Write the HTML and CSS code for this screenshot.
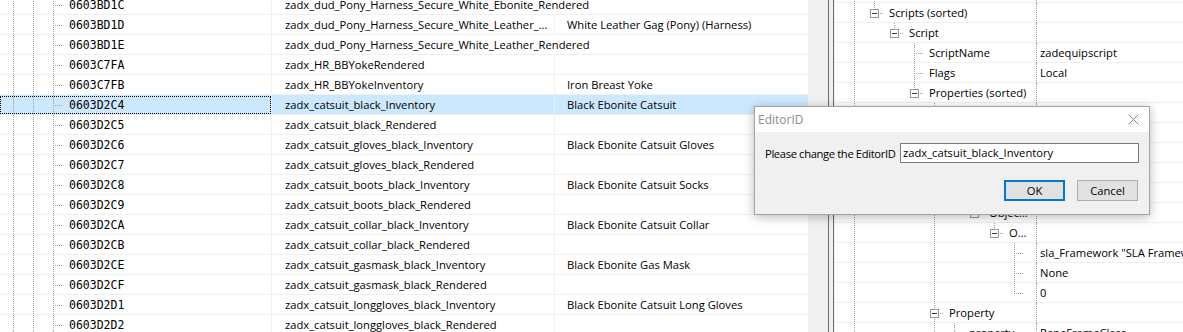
FILE: index.html
```html
<!DOCTYPE html>
<html>
<head>
<meta charset="utf-8">
<link rel="stylesheet" href="styles.css">
</head>
<body>
<div class="app">
  <div class="left">
    <div class="list">
      <div class="row"><div class="c1"><span class="i v"></span><span class="i v"></span><span class="i t"></span><span class="fid">0603BD1C</span></div><div class="c2 over">zadx_dud_Pony_Harness_Secure_White_Ebonite_Rendered</div><div class="c3"></div></div>
      <div class="row"><div class="c1"><span class="i v"></span><span class="i v"></span><span class="i t"></span><span class="fid">0603BD1D</span></div><div class="c2">zadx_dud_Pony_Harness_Secure_White_Leather_...</div><div class="c3">White Leather Gag (Pony) (Harness)</div></div>
      <div class="row"><div class="c1"><span class="i v"></span><span class="i v"></span><span class="i t"></span><span class="fid">0603BD1E</span></div><div class="c2 over">zadx_dud_Pony_Harness_Secure_White_Leather_Rendered</div><div class="c3"></div></div>
      <div class="row"><div class="c1"><span class="i v"></span><span class="i v"></span><span class="i t"></span><span class="fid">0603C7FA</span></div><div class="c2">zadx_HR_BBYokeRendered</div><div class="c3"></div></div>
      <div class="row"><div class="c1"><span class="i v"></span><span class="i v"></span><span class="i t"></span><span class="fid">0603C7FB</span></div><div class="c2">zadx_HR_BBYokeInventory</div><div class="c3">Iron Breast Yoke</div></div>
      <div class="row sel"><div class="c1"><span class="i v"></span><span class="i v"></span><span class="i t"></span><span class="fid">0603D2C4</span><span class="focus"></span></div><div class="c2">zadx_catsuit_black_Inventory</div><div class="c3">Black Ebonite Catsuit</div></div>
      <div class="row"><div class="c1"><span class="i v"></span><span class="i v"></span><span class="i t"></span><span class="fid">0603D2C5</span></div><div class="c2">zadx_catsuit_black_Rendered</div><div class="c3"></div></div>
      <div class="row"><div class="c1"><span class="i v"></span><span class="i v"></span><span class="i t"></span><span class="fid">0603D2C6</span></div><div class="c2">zadx_catsuit_gloves_black_Inventory</div><div class="c3">Black Ebonite Catsuit Gloves</div></div>
      <div class="row"><div class="c1"><span class="i v"></span><span class="i v"></span><span class="i t"></span><span class="fid">0603D2C7</span></div><div class="c2">zadx_catsuit_gloves_black_Rendered</div><div class="c3"></div></div>
      <div class="row"><div class="c1"><span class="i v"></span><span class="i v"></span><span class="i t"></span><span class="fid">0603D2C8</span></div><div class="c2">zadx_catsuit_boots_black_Inventory</div><div class="c3">Black Ebonite Catsuit Socks</div></div>
      <div class="row"><div class="c1"><span class="i v"></span><span class="i v"></span><span class="i t"></span><span class="fid">0603D2C9</span></div><div class="c2">zadx_catsuit_boots_black_Rendered</div><div class="c3"></div></div>
      <div class="row"><div class="c1"><span class="i v"></span><span class="i v"></span><span class="i t"></span><span class="fid">0603D2CA</span></div><div class="c2">zadx_catsuit_collar_black_Inventory</div><div class="c3">Black Ebonite Catsuit Collar</div></div>
      <div class="row"><div class="c1"><span class="i v"></span><span class="i v"></span><span class="i t"></span><span class="fid">0603D2CB</span></div><div class="c2">zadx_catsuit_collar_black_Rendered</div><div class="c3"></div></div>
      <div class="row"><div class="c1"><span class="i v"></span><span class="i v"></span><span class="i t"></span><span class="fid">0603D2CE</span></div><div class="c2">zadx_catsuit_gasmask_black_Inventory</div><div class="c3">Black Ebonite Gas Mask</div></div>
      <div class="row"><div class="c1"><span class="i v"></span><span class="i v"></span><span class="i t"></span><span class="fid">0603D2CF</span></div><div class="c2">zadx_catsuit_gasmask_black_Rendered</div><div class="c3"></div></div>
      <div class="row"><div class="c1"><span class="i v"></span><span class="i v"></span><span class="i t"></span><span class="fid">0603D2D1</span></div><div class="c2">zadx_catsuit_longgloves_black_Inventory</div><div class="c3">Black Ebonite Catsuit Long Gloves</div></div>
      <div class="row"><div class="c1"><span class="i v"></span><span class="i v"></span><span class="i t"></span><span class="fid">0603D2D2</span></div><div class="c2">zadx_catsuit_longgloves_black_Rendered</div><div class="c3"></div></div>
    </div>
  </div>
  <div class="vscroll"></div>
  <div class="splitter"><div class="grip"></div></div>
  <div class="right">
    <div class="rlist">
      <div class="rrow"><div class="name"><span class="i v"></span><span class="i t"></span></div><div class="val"></div></div>
      <div class="rrow"><div class="name"><span class="i v"></span><span class="i e"><span class="box"></span></span><span class="txt">Scripts (sorted)</span></div><div class="val"></div></div>
      <div class="rrow"><div class="name"><span class="i v"></span><span class="i"></span><span class="i e"><span class="box"></span></span><span class="txt">Script</span></div><div class="val"></div></div>
      <div class="rrow"><div class="name"><span class="i v"></span><span class="i"></span><span class="i"></span><span class="i t"></span><span class="txt">ScriptName</span></div><div class="val">zadequipscript</div></div>
      <div class="rrow"><div class="name"><span class="i v"></span><span class="i"></span><span class="i"></span><span class="i t"></span><span class="txt">Flags</span></div><div class="val">Local</div></div>
      <div class="rrow"><div class="name"><span class="i v"></span><span class="i"></span><span class="i"></span><span class="i e"><span class="box"></span></span><span class="txt">Properties (sorted)</span></div><div class="val"></div></div>
      <div class="rrow"><div class="name"><span class="i v"></span><span class="i"></span><span class="i"></span><span class="i"></span><span class="i t"><span class="box"></span></span><span class="txt">Property</span></div><div class="val"></div></div>
      <div class="rrow"><div class="name"><span class="i v"></span><span class="i"></span><span class="i"></span><span class="i"></span><span class="i v"></span><span class="i t"></span><span class="txt">propertyName</span></div><div class="val">libs</div></div>
      <div class="rrow"><div class="name"><span class="i v"></span><span class="i"></span><span class="i"></span><span class="i"></span><span class="i v"></span><span class="i t"></span><span class="txt">Type</span></div><div class="val">Object</div></div>
      <div class="rrow"><div class="name"><span class="i v"></span><span class="i"></span><span class="i"></span><span class="i"></span><span class="i v"></span><span class="i t"></span><span class="txt">Flags</span></div><div class="val">Edited</div></div>
      <div class="rrow"><div class="name"><span class="i v"></span><span class="i"></span><span class="i"></span><span class="i"></span><span class="i v"></span><span class="i e"><span class="box"></span></span><span class="txt">Value</span></div><div class="val"></div></div>
      <div class="rrow"><div class="name"><span class="i v"></span><span class="i"></span><span class="i"></span><span class="i"></span><span class="i v"></span><span class="i"></span><span class="i e"><span class="box"></span></span><span class="txt">Object Union</span></div><div class="val"></div></div>
      <div class="rrow"><div class="name"><span class="i v"></span><span class="i"></span><span class="i"></span><span class="i"></span><span class="i v"></span><span class="i"></span><span class="i"></span><span class="i e"><span class="box"></span></span><span class="txt">Object v2</span></div><div class="val"></div></div>
      <div class="rrow"><div class="name"><span class="i v"></span><span class="i"></span><span class="i"></span><span class="i"></span><span class="i v"></span><span class="i"></span><span class="i"></span><span class="i"></span><span class="i t"></span></div><div class="val">sla_Framework "SLA Framework Quest" [QUST:0A0042D1]</div></div>
      <div class="rrow"><div class="name"><span class="i v"></span><span class="i"></span><span class="i"></span><span class="i"></span><span class="i v"></span><span class="i"></span><span class="i"></span><span class="i"></span><span class="i t"></span></div><div class="val">None</div></div>
      <div class="rrow"><div class="name"><span class="i v"></span><span class="i"></span><span class="i"></span><span class="i"></span><span class="i v"></span><span class="i"></span><span class="i"></span><span class="i"></span><span class="i e"></span></div><div class="val">0</div></div>
      <div class="rrow"><div class="name"><span class="i v"></span><span class="i"></span><span class="i"></span><span class="i"></span><span class="i t"><span class="box"></span></span><span class="txt">Property</span></div><div class="val"></div></div>
      <div class="rrow"><div class="name"><span class="i v"></span><span class="i"></span><span class="i"></span><span class="i"></span><span class="i v"></span><span class="i t"></span><span class="txt">propertyName</span></div><div class="val">RapeFrameClass</div></div>
    </div>
  </div>
</div>

<div class="dialog">
  <div class="titlebar">
    <span class="title">EditorID</span>
    <svg class="close" width="11" height="11" viewBox="0 0 11 11"><path d="M0.5 0.5 L10.5 10.5 M10.5 0.5 L0.5 10.5" stroke="#8a8a8a" stroke-width="1" fill="none"/></svg>
  </div>
  <div class="dbody">
    <div class="field">
      <span class="label">Please change the EditorID</span>
      <div class="input">zadx_catsuit_black_Inventory</div>
    </div>
    <div class="buttons">
      <div class="btn default">OK</div>
      <div class="btn">Cancel</div>
    </div>
  </div>
</div>
</body>
</html>
```

FILE: styles.css
```css
:root {
  --dv: repeating-linear-gradient(to bottom, #a0a0a0 0 1px, transparent 1px 2px);
  --dh: repeating-linear-gradient(to right, #a0a0a0 0 1px, transparent 1px 2px);
  --rowline: linear-gradient(#f0f0f0, #f0f0f0);
}

html, body {
  margin: 0;
  padding: 0;
}

body {
  width: 1183px;
  height: 332px;
  overflow: hidden;
  position: relative;
  background: #ffffff;
  font-family: "Open Sans", "Noto Sans", sans-serif;
  font-size: 11.2px;
  color: #000;
}

.app {
  display: flex;
  height: 332px;
}

/* ---------- left list ---------- */
.left {
  width: 808px;
  flex: none;
  overflow: hidden;
  background: #fff;
}

.list {
  margin-top: -5px;
}

.row {
  display: flex;
  height: 20px;
  line-height: 20px;
  background-image: var(--rowline);
  background-repeat: no-repeat;
  background-position: 0 19px;
  background-size: 100% 1px;
  white-space: nowrap;
}

.row.sel {
  background-color: #cce8ff;
}

.c1 {
  position: relative;
  width: 272px;
  flex: none;
  display: flex;
  padding-left: 3px;
  box-sizing: border-box;
  border-right: 1px solid #f0f0f0;
}

.c2 {
  width: 283px;
  flex: none;
  padding-left: 13px;
  box-sizing: border-box;
  overflow: hidden;
  border-right: 1px solid #f0f0f0;
}

.c2.over {
  overflow: visible;
  border-right-color: transparent;
  position: relative;
  z-index: 1;
}

.c3 {
  flex: 1;
  padding-left: 12px;
  overflow: hidden;
}

.fid {
  font-family: "DejaVu Sans Mono", "Liberation Mono", monospace;
  font-size: 11.5px;
  padding-left: 6px;
}

.focus {
  position: absolute;
  left: 0;
  top: 1px;
  right: 0;
  bottom: 1px;
  border: 1px dotted #000;
}

/* ---------- tree indent cells ---------- */
.i {
  width: 20px;
  height: 20px;
  flex: none;
  display: block;
  box-sizing: border-box;
  background-repeat: no-repeat;
}

.i.v {
  background-image: var(--dv);
  background-size: 1px 20px;
  background-position: 10px 0;
}

.i.t {
  background-image: var(--dv), var(--dh);
  background-size: 1px 20px, 10px 1px;
  background-position: 10px 0, 10px 10px;
}

.i.e {
  background-image: var(--dv), var(--dh);
  background-size: 1px 11px, 10px 1px;
  background-position: 10px 0, 10px 10px;
}

.box {
  display: block;
  position: relative;
  width: 9px;
  height: 9px;
  margin: 6px 0 0 6px;
  box-sizing: border-box;
  border: 1px solid #989898;
  background: #fff;
}

.box::after {
  content: "";
  position: absolute;
  left: 1px;
  top: 3px;
  width: 5px;
  height: 1px;
  background: #333;
}

/* ---------- scrollbar / splitter ---------- */
.vscroll {
  width: 18px;
  flex: none;
  background: #f0f0f0;
}

.splitter {
  width: 9px;
  flex: none;
  background: #f0f0f0;
  padding-left: 2px;
  box-sizing: border-box;
}

.grip {
  width: 6px;
  height: 100%;
  box-sizing: border-box;
  border-left: 1px solid #6d6d6d;
  border-right: 1px solid #6d6d6d;
}

/* ---------- right tree ---------- */
.right {
  flex: 1;
  overflow: hidden;
  background: #fff;
}

.rlist {
  margin-top: -17px;
}

.rrow {
  display: flex;
  height: 20px;
  line-height: 20px;
  white-space: nowrap;
  background-image: var(--rowline);
  background-repeat: no-repeat;
  background-position: 0 19px;
  background-size: 100% 1px;
}

.name {
  width: 201px;
  flex: none;
  display: flex;
  padding-left: 9px;
  box-sizing: border-box;
  overflow: hidden;
}

.txt {
  padding-left: 5px;
  padding-right: 8px;
  overflow: hidden;
  text-overflow: ellipsis;
  min-width: 0;
}

.val {
  flex: 1;
  border-left: 1px dotted #a0a0a0;
  padding-left: 3px;
  overflow: hidden;
}

/* ---------- dialog ---------- */
.dialog {
  position: absolute;
  left: 754px;
  top: 106px;
  width: 396px;
  height: 109px;
  box-sizing: border-box;
  border: 1px solid #a3a3a3;
  background: #f0f0f0;
  box-shadow: 0 2px 10px rgba(0, 0, 0, 0.28);
  z-index: 5;
  display: flex;
  flex-direction: column;
}

.titlebar {
  height: 25px;
  background: #fff;
  display: flex;
  align-items: center;
  justify-content: space-between;
  padding: 0 10px 0 3px;
  flex: none;
}

.title {
  color: #8c8c8c;
  font-size: 12px;
}

.close {
  display: block;
}

.dbody {
  flex: 1;
  display: flex;
  flex-direction: column;
}

.field {
  display: flex;
  align-items: center;
  margin-top: 11px;
  padding: 0 10px;
}

.label {
  white-space: nowrap;
  letter-spacing: -0.35px;
}

.input {
  margin-left: auto;
  width: 239px;
  height: 20px;
  box-sizing: border-box;
  border: 1px solid #7a7a7a;
  background: #fff;
  line-height: 18px;
  padding-left: 2px;
  white-space: nowrap;
}

.buttons {
  display: flex;
  justify-content: flex-end;
  gap: 12px;
  margin-top: 17px;
  padding-right: 11px;
}

.btn {
  width: 61px;
  height: 21px;
  box-sizing: border-box;
  border: 1px solid #adadad;
  background: #e1e1e1;
  text-align: center;
  line-height: 19px;
}

.btn.default {
  border: 2px solid #0078d7;
  line-height: 17px;
}
```
